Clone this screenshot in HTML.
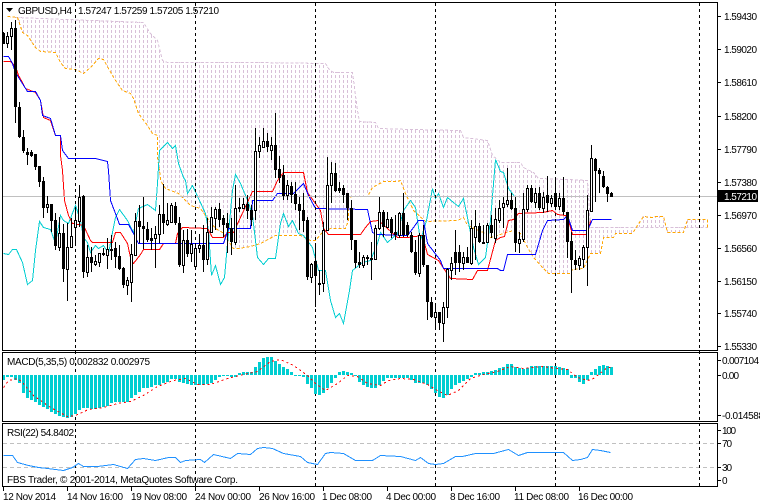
<!DOCTYPE html>
<html><head><meta charset="utf-8"><style>
html,body{margin:0;padding:0;background:#fff;width:760px;height:504px;overflow:hidden}
svg{display:block}
text{font-family:"Liberation Sans",sans-serif;font-size:10px;fill:#000}
.l{fill:none;stroke-width:1;shape-rendering:crispEdges}
</style></head><body>
<svg width="760" height="504" viewBox="0 0 760 504" xmlns="http://www.w3.org/2000/svg">
<defs>
<clipPath id="m"><rect x="3" y="3" width="714" height="347"/></clipPath>
<clipPath id="k"><polygon points="15,17 143,22 150,33 157,40 162,60 167,62 250,62 325,63 328,68 333,72 352,72 357,110 359,121 375,122 378,128 410,129 460,130 463,137 487,140 492,155 500,162 520,162 523,167 533,172 538,178 567,179 587,180 590,227 707,227 707,219 687,219 683,232 667,232 663,216 655,216 652,217 643,216 637,225 632,233 615,233 613,237 603,237 600,253 590,253 583,268 572,269 570,273 548,273 543,268 533,257 527,247 520,233 513,230 490,237 483,232 467,225 463,217 457,220 425,221 413,210 405,193 400,180 397,181 383,181 372,187 367,196 352,196 348,197 348,220 345,228 330,228 322,232 315,240 310,240 300,235 275,235 260,243 250,246 238,248 233,248 222,232 215,228 205,215 200,208 190,205 178,193 165,188 160,180 157,157 157,135 152,133 147,125 138,113 133,98 130,93 122,90 115,80 108,68 103,59 98,58 90,67 83,73 75,69 65,68 60,62 55,52 40,51 35,47 27,35 22,32 17,17"/></clipPath>
</defs>
<rect width="760" height="504" fill="#fff"/>
<g clip-path="url(#m)">
<path clip-path="url(#k)" shape-rendering="crispEdges" fill="none" stroke="#d8bfd8" stroke-dasharray="3 2" d="M15.500 0V360M19.500 0V360M23.500 0V360M27.500 0V360M31.500 0V360M35.500 0V360M39.500 0V360M43.500 0V360M47.500 0V360M51.500 0V360M55.500 0V360M59.500 0V360M63.500 0V360M67.500 0V360M71.500 0V360M75.500 0V360M79.500 0V360M83.500 0V360M87.500 0V360M91.500 0V360M95.500 0V360M99.500 0V360M103.500 0V360M107.500 0V360M111.500 0V360M115.500 0V360M119.500 0V360M123.500 0V360M127.500 0V360M131.500 0V360M135.500 0V360M139.500 0V360M143.500 0V360M147.500 0V360M151.500 0V360M155.500 0V360M159.500 0V360M163.500 0V360M167.500 0V360M171.500 0V360M175.500 0V360M179.500 0V360M183.500 0V360M187.500 0V360M191.500 0V360M195.500 0V360M199.500 0V360M203.500 0V360M207.500 0V360M211.500 0V360M215.500 0V360M219.500 0V360M223.500 0V360M227.500 0V360M231.500 0V360M235.500 0V360M239.500 0V360M243.500 0V360M247.500 0V360M251.500 0V360M255.500 0V360M259.500 0V360M263.500 0V360M267.500 0V360M271.500 0V360M275.500 0V360M279.500 0V360M283.500 0V360M287.500 0V360M291.500 0V360M295.500 0V360M299.500 0V360M303.500 0V360M307.500 0V360M311.500 0V360M315.500 0V360M319.500 0V360M323.500 0V360M327.500 0V360M331.500 0V360M335.500 0V360M339.500 0V360M343.500 0V360M347.500 0V360M351.500 0V360M355.500 0V360M359.500 0V360M363.500 0V360M367.500 0V360M371.500 0V360M375.500 0V360M379.500 0V360M383.500 0V360M387.500 0V360M391.500 0V360M395.500 0V360M399.500 0V360M403.500 0V360M407.500 0V360M411.500 0V360M415.500 0V360M419.500 0V360M423.500 0V360M427.500 0V360M431.500 0V360M435.500 0V360M439.500 0V360M443.500 0V360M447.500 0V360M451.500 0V360M455.500 0V360M459.500 0V360M463.500 0V360M467.500 0V360M471.500 0V360M475.500 0V360M479.500 0V360M483.500 0V360M487.500 0V360M491.500 0V360M495.500 0V360M499.500 0V360M503.500 0V360M507.500 0V360M511.500 0V360M515.500 0V360M519.500 0V360M523.500 0V360M527.500 0V360M531.500 0V360M535.500 0V360M539.500 0V360M543.500 0V360M547.500 0V360M551.500 0V360M555.500 0V360M559.500 0V360M563.500 0V360M567.500 0V360M571.500 0V360M575.500 0V360M579.500 0V360M583.500 0V360M587.500 0V360M591.500 0V360M595.500 0V360M599.500 0V360M603.500 0V360M607.500 0V360M611.500 0V360M615.500 0V360M619.500 0V360M623.500 0V360M627.500 0V360M631.500 0V360M635.500 0V360M639.500 0V360M643.500 0V360M647.500 0V360M651.500 0V360M655.500 0V360M659.500 0V360M663.500 0V360M667.500 0V360M671.500 0V360M675.500 0V360M679.500 0V360M683.500 0V360M687.500 0V360M691.500 0V360M695.500 0V360M699.500 0V360M703.500 0V360M707.500 0V360"/>
<g transform="translate(.5 .5)">
<polyline class="l" stroke="#d8bfd8" stroke-dasharray="3 2" points="15,17 143,22 150,33 157,40 162,60 167,62 250,62 325,63 328,68 333,72 352,72 357,110 359,121 375,122 378,128 410,129 460,130 463,137 487,140 492,155 500,162 520,162 523,167 533,172 538,178 567,179 587,180 590,227 707,227"/>
<polyline class="l" stroke="#ffa500" stroke-dasharray="3 2" points="7,16 17,17 22,32 27,35 35,47 40,51 55,52 60,62 65,68 75,69 83,73 90,67 98,58 103,59 108,68 115,80 122,90 130,93 133,98 138,113 147,125 152,133 157,135 157,157 160,177 160,180 165,188 178,193 190,205 200,208 205,215 215,228 222,232 233,248 238,248 250,246 260,243 275,235 300,235 310,240 315,240 322,232 330,228 345,228 348,220 348,197 352,196 367,196 372,187 383,181 397,181 400,180 405,193 413,210 425,221 457,220 463,217 467,225 483,232 490,237 513,230 520,233 527,247 533,257 543,268 548,273 570,273 572,269 583,268 590,253 600,253 603,237 613,237 615,233 632,233 637,225 643,216 652,217 655,216 663,216 667,232 683,232 687,219 707,219 707,227"/>
<polyline class="l" stroke="#00ced1" points="3,253 8,254 12,249 16,249 22,262 27,284 32,280 35,250 39,221 43,227 50,229 55,243 60,215 63,220 68,223 75,205 80,220 83,237 87,242 90,252 95,245 98,248 103,245 108,253 112,232 115,217 119,209 127,220 133,232 138,208 147,204 155,210 157,183 159,150 167,142 172,148 175,145 178,163 183,177 185,180 187,193 192,185 205,213 208,230 211,275 215,265 220,284 224,277 227,243 232,190 235,174 240,183 248,202 252,215 257,257 263,264 268,258 275,258 280,223 283,213 288,226 292,220 298,233 303,235 312,247 318,270 325,270 330,300 335,317 339,313 343,323 349,290 352,270 362,262 370,260 377,243 380,232 387,242 397,233 403,210 410,200 415,207 420,240 426,220 432,188 435,198 438,193 443,207 447,197 453,202 458,206 463,198 468,222 473,247 478,264 485,257 490,220 495,159 500,171 503,172 508,188 514,196"/>
<polyline class="l" stroke="#ff0000" points="3,61 10,61 15,66 18,75 22,82 25,88 35,92 40,100 43,117 50,120 55,135 60,135 60,155 62,170 64,200 68,215 72,223 83,225 90,240 92,242 112,242 115,232 120,232 127,243 130,257 133,263 140,254 143,249 159,249 163,243 175,243 177,233 182,227 207,228 212,237 223,237 227,232 233,232 252,191 272,191 277,180 283,172 303,172 307,192 315,203 320,210 323,228 328,234 360,234 365,227 370,221 378,220 387,228 397,237 407,237 422,235 427,254 438,260 450,278 472,279 477,270 487,270 495,240 500,237 504,236 508,220 513,219 518,213 542,212 552,210 557,214 565,215 568,220 572,234 587,234 590,220"/>
<polyline class="l" stroke="#0000ff" points="3,56 8,56 12,63 15,72 20,80 27,91 35,91 40,100 42,115 50,118 55,135 60,135 62,150 68,158 95,158 107,161 108,170 110,200 115,213 119,224 128,224 133,233 138,243 223,243 228,228 250,228 252,200 272,200 277,193 293,193 303,183 308,195 315,208 367,209 372,232 377,234 407,235 413,227 418,220 423,220 427,243 440,260 443,268 497,268 500,270 503,270 507,254 535,254 542,230 547,220 563,219 567,215 572,230 587,230 592,219 611,219"/>
</g>
</g>
<path shape-rendering="crispEdges" stroke="#c0c0c0" fill="none" d="M3 196.500H717"/>
<path shape-rendering="crispEdges" stroke="#c0c0c0" fill="none" stroke-dasharray="4 3" d="M3 443.500H717M3 467.500H717"/>
<path shape-rendering="crispEdges" stroke="#000" fill="none" stroke-dasharray="3 3" d="M75.500 3V486M195.500 3V486M315.500 3V486M435.500 3V486M555.500 3V486M699.500 3V486"/>
<!-- MACD histogram -->
<path shape-rendering="crispEdges" fill="none" stroke="#00ced1" stroke-width="3" d="M3.500 375v5M7.500 375v2M11.500 375v2M15.500 375v5M19.500 375v8M23.500 375v18M27.500 375v23M31.500 375v25M35.500 375v27M39.500 375v30M43.500 375v32M47.500 375v34M51.500 375v37M55.500 375v39M59.500 375v41M63.500 375v42M67.500 375v43M71.500 375v42M75.500 375v39M79.500 375v35M83.500 375v33M87.500 375v33M91.500 375v34M95.500 375v34M99.500 375v33M103.500 375v32M107.500 375v31M111.500 375v28M115.500 375v27M119.500 375v27M123.500 375v27M127.500 375v27M131.500 375v23M135.500 375v20M139.500 375v17M143.500 375v13M147.500 375v13M151.500 375v12M155.500 375v10M159.500 375v10M163.500 375v8M167.500 375v7M171.500 375v4M175.500 375v4M179.500 375v7M183.500 375v8M187.500 375v9M191.500 375v10M195.500 375v10M199.500 375v10M203.500 375v10M207.500 375v9M211.500 375v8M215.500 375v5M219.500 375v2M223.500 375v1M227.500 375v1M231.500 375v2M235.500 375v2M239.500 375v-2M243.500 375v-3M247.500 375v-3M251.500 375v-3M255.500 375v-8M259.500 375v-13M263.500 375v-17M267.500 375v-18M271.500 375v-18M275.500 375v-14M279.500 375v-11M283.500 375v-8M287.500 375v-6M291.500 375v-3M295.500 375v1M299.500 375v1M303.500 375v2M307.500 375v9M311.500 375v13M315.500 375v19M319.500 375v20M323.500 375v18M327.500 375v13M331.500 375v8M335.500 375v3M339.500 375v-3M343.500 375v-4M347.500 375v-3M351.500 375v-2M355.500 375v1M359.500 375v7M363.500 375v10M367.500 375v12M371.500 375v13M375.500 375v13M379.500 375v10M383.500 375v6M387.500 375v3M391.500 375v3M395.500 375v3M399.500 375v3M403.500 375v3M407.500 375v3M411.500 375v5M415.500 375v8M419.500 375v8M423.500 375v8M427.500 375v10M431.500 375v14M435.500 375v18M439.500 375v22M443.500 375v23M447.500 375v20M451.500 375v14M455.500 375v10M459.500 375v8M463.500 375v6M467.500 375v4M471.500 375v2M475.500 375v-2M479.500 375v-2M483.500 375v-3M487.500 375v-3M491.500 375v-4M495.500 375v-5M499.500 375v-7M503.500 375v-8M507.500 375v-11M511.500 375v-11M515.500 375v-8M519.500 375v-7M523.500 375v-6M527.500 375v-7M531.500 375v-9M535.500 375v-9M539.500 375v-9M543.500 375v-9M547.500 375v-9M551.500 375v-9M555.500 375v-9M559.500 375v-8M563.500 375v-7M567.500 375v-6M571.500 375v3M575.500 375v3M579.500 375v7M583.500 375v9M587.500 375v5M591.500 375v-3M595.500 375v-6M599.500 375v-9M603.500 375v-10M607.500 375v-9M611.500 375v-8"/>
<g transform="translate(.5 .5)">
<polyline class="l" stroke="#ff0000" stroke-dasharray="2 3" points="3,387 8,380 17,378 22,382 33,395 50,407 67,416 75,415 88,409 103,407 117,403 130,401 143,395 157,386 173,380 185,378 197,384 210,384 227,378 243,374 257,371 270,361 280,359 293,365 307,375 315,383 325,390 337,383 347,375 357,376 367,383 380,385 388,380 400,378 413,379 427,384 435,389 447,395 458,390 470,378 483,374 497,371 510,366 523,368 540,366 567,369 577,377 587,380 593,378 607,367 612,367"/>
<polyline class="l" stroke="#1e90ff" points="3,455 12,455 17,462 28,465 38,467 47,468 63,470 72,467 78,463 83,466 97,466 113,464 127,468 135,459 143,458 155,460 168,457 175,457 180,462 185,460 200,459 204,462 213,454 230,458 237,453 250,454 257,448 263,447 272,448 283,453 300,456 307,462 317,464 325,453 330,452 343,453 355,460 372,460 380,455 400,456 415,460 420,457 428,463 435,464 443,463 455,456 462,456 475,453 493,453 508,449 518,455 527,452 563,452 572,460 580,459 587,457 592,449 600,450 610,452"/>
</g>
<!-- Candle wicks -->
<path shape-rendering="crispEdges" stroke="#000" fill="none" d="M3.500 32V44M7.500 32V48M11.500 22V50M15.500 20V123M19.500 102V138M23.500 130V153M27.500 148V165M31.500 150V157M35.500 154V170M39.500 166V187M43.500 177V218M47.500 196V213M51.500 204V232M55.500 213V250M59.500 217V251M63.500 224V282M67.500 223V301M71.500 218V248M75.500 207V245M79.500 185V227M83.500 195V278M87.500 245V277M91.500 247V272M95.500 255V266M99.500 253V267M103.500 248V256M107.500 238V269M111.500 235V260M115.500 242V268M119.500 245V270M123.500 267V288M127.500 277V295M131.500 244V302M135.500 213V256M139.500 205V243M143.500 197V249M147.500 222V242M151.500 228V250M155.500 226V268M159.500 205V243M163.500 184V234M167.500 203V226M171.500 203V223M175.500 202V225M179.500 217V267M183.500 230V273M187.500 229V257M191.500 230V262M195.500 243V267M199.500 234V253M203.500 225V272M207.500 218V265M211.500 207V233M215.500 207V230M219.500 203V227M223.500 215V237M227.500 213V253M231.500 218V255M235.500 185V245M239.500 198V212M243.500 198V208M247.500 195V219M251.500 205V226M255.500 128V220M259.500 137V158M263.500 128V148M267.500 133V152M271.500 137V160M275.500 113V178M279.500 156V183M283.500 165V200M287.500 180V200M291.500 182V203M295.500 182V210M299.500 197V230M303.500 193V232M307.500 217V280M311.500 263V283M315.500 243V307M319.500 270V295M323.500 222V292M327.500 157V231M331.500 162V203M335.500 163V192M339.500 182V193M343.500 185V203M347.500 193V220M351.500 200V250M355.500 240V268M359.500 252V268M363.500 255V268M367.500 255V265M371.500 242V280M375.500 225V260M379.500 197V230M383.500 210V237M387.500 212V228M391.500 217V238M395.500 215V240M399.500 212V238M403.500 193V237M407.500 222V237M411.500 232V253M415.500 240V275M419.500 233V277M423.500 225V267M427.500 265V320M431.500 297V318M435.500 303V328M439.500 312V330M443.500 302V342M447.500 268V318M451.500 257V280M455.500 230V275M459.500 245V272M463.500 252V270M467.500 247V263M471.500 220V265M475.500 210V260M479.500 223V243M483.500 225V243M487.500 223V243M491.500 215V238M495.500 208V243M499.500 200V223M503.500 197V228M507.500 168V207M511.500 193V210M515.500 197V252M519.500 232V253M523.500 193V242M527.500 185V212M531.500 185V203M535.500 188V208M539.500 187V210M543.500 192V213M547.500 176V212M551.500 195V207M555.500 178V210M559.500 193V210M563.500 177V215M567.500 212V258M571.500 232V293M575.500 250V270M579.500 256V270M583.500 245V268M587.500 195V286M591.500 145V212M595.500 158V202M599.500 168V193M603.500 171V188M607.500 186V202M611.500 192V197"/>
<!-- Black bodies -->
<path shape-rendering="crispEdges" fill="#000" d="M2 33h3V44h-3zM14 28h3V107h-3zM18 107h3V137h-3zM22 137h3V151h-3zM26 152h3V155h-3zM30 152h3V156h-3zM34 154h3V167h-3zM38 166h3V182h-3zM42 181h3V208h-3zM50 204h3V221h-3zM54 220h3V246h-3zM62 233h3V269h-3zM82 196h3V272h-3zM90 257h3V263h-3zM102 253h3V255h-3zM110 249h3V251h-3zM114 248h3V257h-3zM118 256h3V269h-3zM122 268h3V285h-3zM138 221h3V227h-3zM142 226h3V229h-3zM146 229h3V240h-3zM150 238h3V241h-3zM162 214h3V223h-3zM174 206h3V223h-3zM178 223h3V265h-3zM186 240h3V254h-3zM202 245h3V260h-3zM218 209h3V220h-3zM222 218h3V225h-3zM226 223h3V228h-3zM230 228h3V242h-3zM238 207h3V209h-3zM246 204h3V211h-3zM250 210h3V220h-3zM266 141h3V147h-3zM274 145h3V170h-3zM278 169h3V178h-3zM282 175h3V196h-3zM290 186h3V195h-3zM294 194h3V204h-3zM298 204h3V211h-3zM302 210h3V221h-3zM306 220h3V277h-3zM314 261h3V276h-3zM318 283h3V285h-3zM334 173h3V191h-3zM338 188h3V191h-3zM342 188h3V195h-3zM346 193h3V208h-3zM350 208h3V240h-3zM354 240h3V263h-3zM358 262h3V265h-3zM366 257h3V259h-3zM370 258h3V260h-3zM382 212h3V227h-3zM390 219h3V233h-3zM394 232h3V235h-3zM402 213h3V235h-3zM406 225h3V235h-3zM410 235h3V252h-3zM414 252h3V273h-3zM422 235h3V265h-3zM426 265h3V302h-3zM430 302h3V317h-3zM438 312h3V323h-3zM454 252h3V263h-3zM458 252h3V263h-3zM466 257h3V263h-3zM478 226h3V242h-3zM482 242h3V244h-3zM490 225h3V233h-3zM510 200h3V209h-3zM514 208h3V243h-3zM530 188h3V202h-3zM538 193h3V208h-3zM546 195h3V203h-3zM554 193h3V207h-3zM562 198h3V212h-3zM566 212h3V242h-3zM570 241h3V260h-3zM574 260h3V265h-3zM594 159h3V171h-3zM598 170h3V174h-3zM602 176h3V187h-3zM606 187h3V194h-3zM610 193h3V197h-3z"/>
<!-- White bodies -->
<path shape-rendering="crispEdges" fill="#fff" stroke="#000" d="M6.500 36.500h2V43.500h-2zM10.500 28.500h2V36.500h-2zM46.500 204.500h2V207.500h-2zM58.500 233.500h2V247.500h-2zM66.500 247.500h2V269.500h-2zM70.500 236.500h2V247.500h-2zM74.500 220.500h2V227.500h-2zM78.500 197.500h2V221.500h-2zM86.500 257.500h2V272.500h-2zM94.500 261.500h2V264.500h-2zM98.500 253.500h2V262.500h-2zM106.500 249.500h2V255.500h-2zM126.500 280.500h2V285.500h-2zM130.500 254.500h2V282.500h-2zM134.500 221.500h2V255.500h-2zM154.500 234.500h2V238.500h-2zM158.500 214.500h2V234.500h-2zM166.500 220.500h2V224.500h-2zM170.500 205.500h2V222.500h-2zM182.500 240.500h2V265.500h-2zM190.500 244.500h2V253.500h-2zM194.500 248.500h2V266.500h-2zM198.500 245.500h2V248.500h-2zM206.500 232.500h2V259.500h-2zM210.500 217.500h2V232.500h-2zM214.500 209.500h2V218.500h-2zM234.500 208.500h2V242.500h-2zM242.500 204.500h2V208.500h-2zM254.500 151.500h2V210.500h-2zM258.500 145.500h2V151.500h-2zM262.500 141.500h2V147.500h-2zM270.500 145.500h2V150.500h-2zM286.500 185.500h2V195.500h-2zM310.500 264.500h2V277.500h-2zM322.500 230.500h2V283.500h-2zM326.500 185.500h2V230.500h-2zM330.500 173.500h2V185.500h-2zM362.500 257.500h2V265.500h-2zM374.500 228.500h2V259.500h-2zM378.500 212.500h2V228.500h-2zM386.500 219.500h2V227.500h-2zM398.500 213.500h2V235.500h-2zM418.500 235.500h2V273.500h-2zM434.500 312.500h2V317.500h-2zM442.500 307.500h2V323.500h-2zM446.500 269.500h2V307.500h-2zM450.500 263.500h2V270.500h-2zM462.500 257.500h2V263.500h-2zM470.500 228.500h2V263.500h-2zM474.500 226.500h2V237.500h-2zM486.500 225.500h2V242.500h-2zM494.500 219.500h2V238.500h-2zM498.500 208.500h2V220.500h-2zM502.500 203.500h2V207.500h-2zM506.500 200.500h2V204.500h-2zM518.500 239.500h2V243.500h-2zM522.500 209.500h2V239.500h-2zM526.500 188.500h2V209.500h-2zM534.500 193.500h2V202.500h-2zM542.500 197.500h2V208.500h-2zM550.500 198.500h2V203.500h-2zM558.500 198.500h2V206.500h-2zM578.500 258.500h2V265.500h-2zM582.500 247.500h2V259.500h-2zM586.500 210.500h2V247.500h-2zM590.500 158.500h2V211.500h-2z"/>
<!-- Frames -->
<path shape-rendering="crispEdges" fill="none" stroke="#000" d="M2.500 2.500H717.500V350.500H2.500ZM2.500 352.500H717.500V421.500H2.500ZM2.500 423.500H717.500V486.500H2.500Z"/>
<!-- Ticks -->
<path shape-rendering="crispEdges" fill="none" stroke="#000" d="M718 16.500h3M718 49.500h3M718 82.500h3M718 116.500h3M718 149.500h3M718 182.500h3M718 215.500h3M718 248.500h3M718 281.500h3M718 313.500h3M718 346.500h3M718 360.500h3M718 375.500h3M718 415.500h3M718 430.500h3M718 443.500h3M718 467.500h3M718 480.500h3M3.500 487v4M67.500 487v4M131.500 487v4M195.500 487v4M259.500 487v4M323.500 487v4M387.500 487v4M451.500 487v4M515.500 487v4M579.500 487v4"/>
<polygon points="6,8 13,8 9.500,12" fill="#000"/>
<text x="18" y="14" textLength="54">GBPUSD,H4</text>
<text x="78" y="14" textLength="141">1.57247 1.57259 1.57205 1.57210</text>
<text x="7" y="365" textLength="143">MACD(5,35,5) 0.002832 0.002975</text>
<text x="7" y="436" textLength="67">RSI(22) 54.8402</text>
<text x="7" y="483" textLength="231">FBS Trader, © 2001-2014, MetaQuotes Software Corp.</text>
<g>
<text x="724" y="20" textLength="33">1.59430</text>
<text x="724" y="53" textLength="33">1.59020</text>
<text x="724" y="86" textLength="33">1.58610</text>
<text x="724" y="120" textLength="33">1.58200</text>
<text x="724" y="153" textLength="33">1.57790</text>
<text x="724" y="186" textLength="33">1.57380</text>
<text x="724" y="219" textLength="33">1.56970</text>
<text x="724" y="252" textLength="33">1.56560</text>
<text x="724" y="285" textLength="33">1.56150</text>
<text x="724" y="317" textLength="33">1.55740</text>
<text x="724" y="350" textLength="33">1.55330</text>
<rect x="718" y="190" width="40" height="12" fill="#000"/>
<text x="724" y="200" textLength="33" style="fill:#fff">1.57210</text>
<text x="722" y="364" textLength="37">0.007104</text>
<text x="722" y="379" textLength="17">0.00</text>
<text x="722" y="419" textLength="42">-0.014588</text>
<text x="722" y="434" textLength="14">100</text>
<text x="722" y="447" textLength="10">70</text>
<text x="722" y="471" textLength="10">30</text>
<text x="722" y="484" textLength="5">0</text>
</g>
<text x="3" y="500" textLength="53">12 Nov 2014</text>
<text x="67" y="500" textLength="56">14 Nov 16:00</text>
<text x="131" y="500" textLength="56">19 Nov 08:00</text>
<text x="195" y="500" textLength="56">24 Nov 00:00</text>
<text x="259" y="500" textLength="56">26 Nov 16:00</text>
<text x="322" y="500" textLength="50">1 Dec 08:00</text>
<text x="386" y="500" textLength="50">4 Dec 00:00</text>
<text x="450" y="500" textLength="50">8 Dec 16:00</text>
<text x="514" y="500" textLength="55">11 Dec 08:00</text>
<text x="578" y="500" textLength="55">16 Dec 00:00</text>
</svg>
</body></html>
